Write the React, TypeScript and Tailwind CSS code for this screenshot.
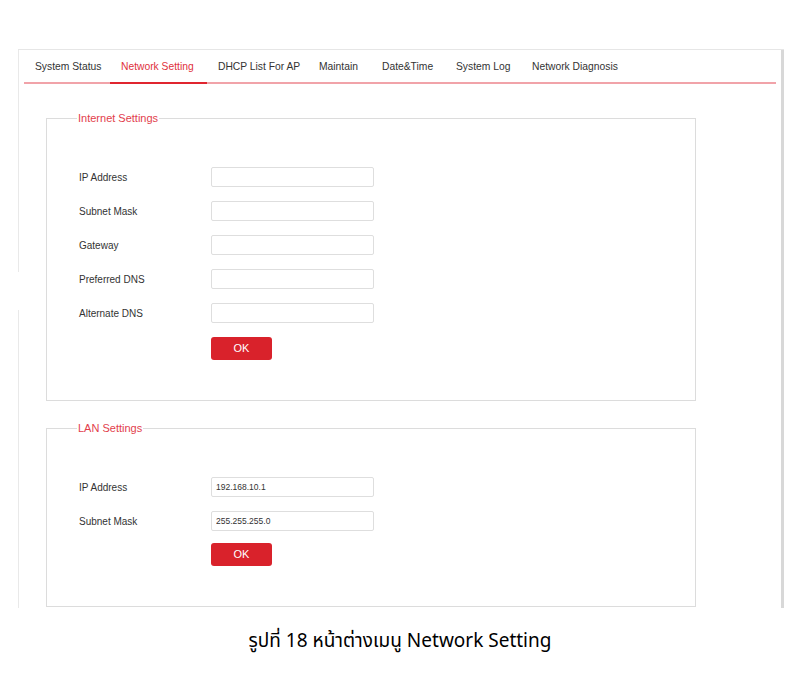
import React from "react";

const tabs: { t: string; w: string }[] = [
  { t: "System Status", w: "w-[86px]" },
  { t: "Network Setting", w: "w-[97px]" },
  { t: "DHCP List For AP", w: "w-[101px]" },
  { t: "Maintain", w: "w-[63px]" },
  { t: "Date&Time", w: "w-[74px]" },
  { t: "System Log", w: "w-[76px]" },
  { t: "Network Diagnosis", w: "w-[110px]" },
];

function Row({ label, value }: { label: string; value?: string }) {
  return (
    <div className="flex items-center h-[20px]">
      <div className="w-[132px] text-[10px] text-[#333]">{label}</div>
      <input
        readOnly
        value={value ?? ""}
        className="w-[163px] h-[20px] border border-[#dedede] rounded-[2px] px-[4px] text-[8.5px] text-[#333] outline-none bg-white"
      />
    </div>
  );
}

function Section({
  title,
  rows,
  compact,
}: {
  title: string;
  rows: { label: string; value?: string }[];
  compact?: boolean;
}) {
  return (
    <fieldset
      className={
        compact
          ? "ml-[22px] w-[650px] border border-[#dcdcdc] pl-[32px] pt-[42px] pb-[40px]"
          : "ml-[22px] w-[650px] border border-[#dcdcdc] pl-[32px] pt-[42px] pb-[40px]"
      }
    >
      <legend className="-ml-[2px] px-[1px] text-[11px] leading-[14px] text-[#e2404c]">
        {title}
      </legend>
      <div className="flex flex-col gap-[14px]">
        {rows.map((r) => (
          <Row key={r.label} label={r.label} value={r.value} />
        ))}
      </div>
      <div className={compact ? "mt-[10px] ml-[132px]" : "mt-[12px] ml-[132px]"}>
        <button className="w-[61px] h-[23px] rounded-[3px] bg-[#d9222b] text-white text-[11px] leading-[23px]">
          OK
        </button>
      </div>
    </fieldset>
  );
}

export default function App() {
  return (
    <div
      className="w-[800px] h-[700px] bg-white pt-[49px]"
      style={{ fontFamily: '"Liberation Sans", Arial, sans-serif' }}
    >
      <div className="ml-[18px] w-[766px] h-[559px] flex border-t border-[#e6e6e6]">
        <div className="w-[1px] flex flex-col">
          <div className="h-[222px] bg-[#e9e9e9]" />
          <div className="h-[298px] mt-[38px] bg-[#e9e9e9]" />
        </div>
        <div className="flex-1 px-[5px]">
          <div className="flex h-[34px] border-b-2 border-[#f1a3a9]">
            {tabs.map((tab, i) => (
              <div
                key={tab.t}
                className={
                  i === 1
                    ? `${tab.w} px-[11px] pt-[1px] h-[34px] -mb-[2px] border-b-2 border-[#e0252f] flex items-center whitespace-nowrap text-[10.3px] text-[#e0303c]`
                    : `${tab.w} px-[11px] pt-[1px] h-[32px] flex items-center whitespace-nowrap text-[10.3px] text-[#333]`
                }
              >
                {tab.t}
              </div>
            ))}
          </div>
          <div className="pt-[27px] flex flex-col gap-[20px]">
            <Section
              title="Internet Settings"
              rows={[
                { label: "IP Address" },
                { label: "Subnet Mask" },
                { label: "Gateway" },
                { label: "Preferred DNS" },
                { label: "Alternate DNS" },
              ]}
            />
            <Section
              title="LAN Settings"
              compact
              rows={[
                { label: "IP Address", value: "192.168.10.1" },
                { label: "Subnet Mask", value: "255.255.255.0" },
              ]}
            />
          </div>
        </div>
        <div className="w-[3px] bg-[#d8d8d8]" />
      </div>
      <div
        className="mt-[18px] text-center text-[19px] text-black"
        style={{ fontFamily: '"Noto Sans", "Noto Sans Thai", "DejaVu Sans", sans-serif' }}
      >
        รูปที่ 18 หน้าต่างเมนู Network Setting
      </div>
    </div>
  );
}
